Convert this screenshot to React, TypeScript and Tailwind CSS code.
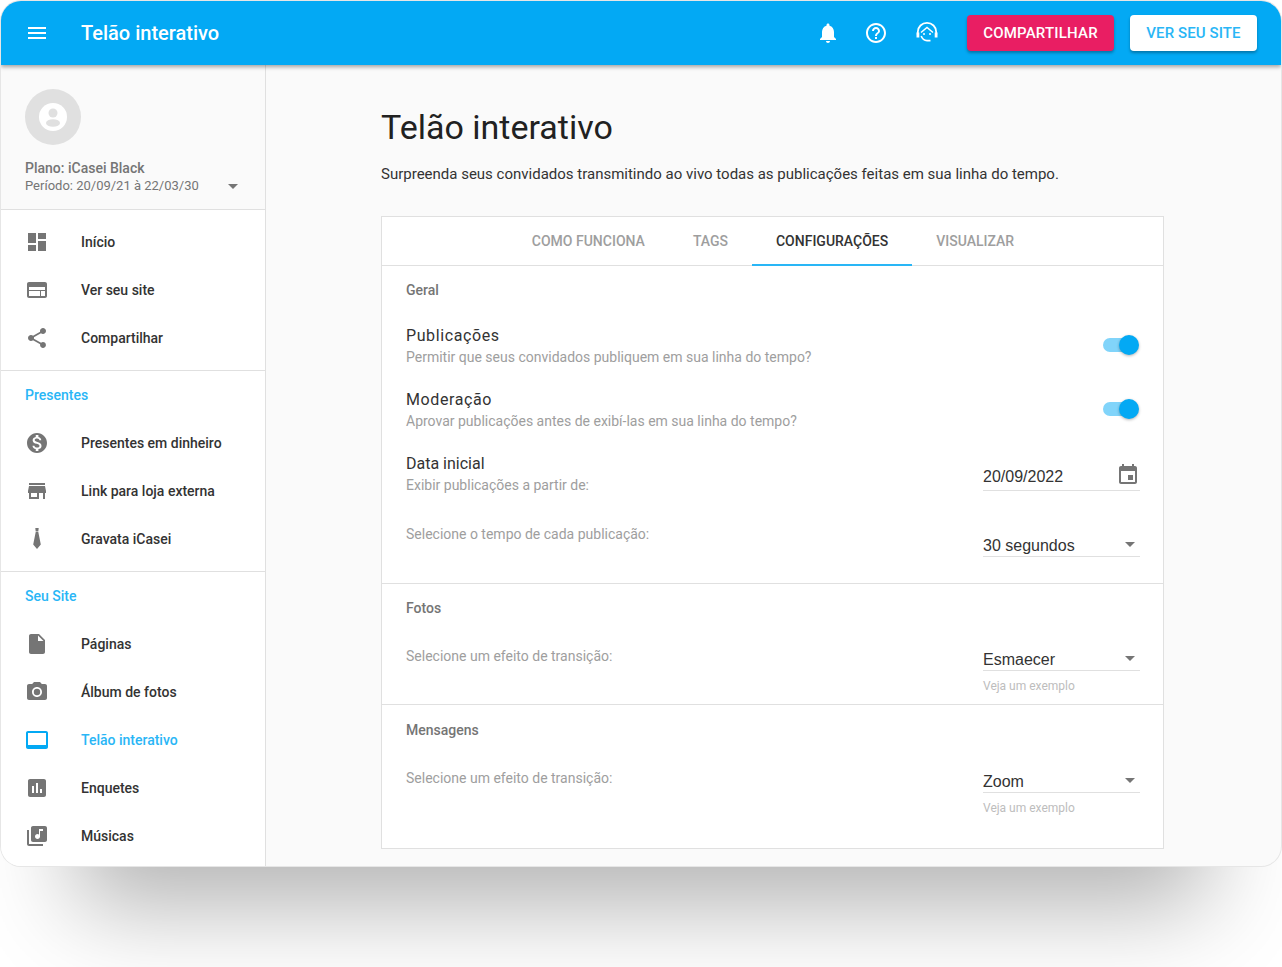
const PATHS = {
  menu: "M3 18h18v-2H3v2zm0-5h18v-2H3v2zm0-7v2h18V6H3z",
  bell: "M12 22c1.1 0 2-.9 2-2h-4c0 1.1.9 2 2 2zm6-6v-5c0-3.07-1.64-5.64-4.5-6.32V4c0-.83-.67-1.5-1.5-1.5s-1.5.67-1.5 1.5v.68C7.63 5.36 6 7.92 6 11v5l-2 2v1h16v-1l-2-2z",
  help: "M11 18h2v-2h-2v2zm1-16C6.48 2 2 6.48 2 12s4.48 10 10 10 10-4.48 10-10S17.52 2 12 2zm0 18c-4.41 0-8-3.59-8-8s3.59-8 8-8 8 3.59 8 8-3.59 8-8 8zm0-14c-2.21 0-4 1.79-4 4h2c0-1.1.9-2 2-2s2 .9 2 2c0 2-3 1.75-3 5h2c0-2.25 3-2.5 3-5 0-2.21-1.79-4-4-4z",
  dashboard: "M3 13h8V3H3v10zm0 8h8v-6H3v6zm10 0h8V11h-8v10zm0-18v6h8V3h-8z",
  web: "M20 4H4c-1.1 0-1.99.9-1.99 2L2 18c0 1.1.9 2 2 2h16c1.1 0 2-.9 2-2V6c0-1.1-.9-2-2-2zM4 18v-5h11v5H4zm12 0v-5h4v5h-4zM4 12V9h16v3H4z",
  share: "M18 16.08c-.76 0-1.44.3-1.96.77L8.91 12.7c.05-.23.09-.46.09-.7s-.04-.47-.09-.7l7.05-4.11c.54.5 1.25.81 2.04.81 1.66 0 3-1.34 3-3s-1.34-3-3-3-3 1.34-3 3c0 .24.04.47.09.7L8.04 9.81C7.5 9.31 6.79 9 6 9c-1.66 0-3 1.34-3 3s1.34 3 3 3c.79 0 1.5-.31 2.04-.81l7.12 4.16c-.05.21-.08.43-.08.65 0 1.61 1.31 2.92 2.92 2.92 1.61 0 2.92-1.31 2.92-2.92s-1.31-2.92-2.92-2.92z",
  money: "M12 2C6.48 2 2 6.48 2 12s4.48 10 10 10 10-4.48 10-10S17.52 2 12 2zm1.41 16.09V20h-2.67v-1.93c-1.71-.36-3.16-1.46-3.27-3.4h1.96c.1 1.05.82 1.87 2.65 1.87 1.96 0 2.4-.98 2.4-1.59 0-.83-.44-1.61-2.67-2.14-2.48-.6-4.18-1.62-4.18-3.67 0-1.72 1.39-2.84 3.11-3.21V4h2.67v1.95c1.86.45 2.79 1.86 2.85 3.39H14.3c-.05-1.11-.64-1.87-2.22-1.87-1.5 0-2.4.68-2.4 1.64 0 .84.65 1.39 2.67 1.91s4.18 1.39 4.18 3.91c-.01 1.83-1.38 2.83-3.12 3.16z",
  store: "M20 4H4v2h16V4zm1 10v-2l-1-5H4l-1 5v2h1v6h10v-6h4v6h2v-6h1zm-9 4H6v-4h6v4z",
  tie: "M10.3 1h3.4l-.4 3.4h-2.6zM10.7 5h2.6l2.5 12.5L12 22l-3.8-4.5z",
  file: "M6 2c-1.1 0-1.99.9-1.99 2L4 20c0 1.1.89 2 1.99 2H18c1.1 0 2-.9 2-2V8l-6-6H6zm7 7V3.5L18.5 9H13z",
  camera: "M9 2L7.17 4H4c-1.1 0-2 .9-2 2v12c0 1.1.9 2 2 2h16c1.1 0 2-.9 2-2V6c0-1.1-.9-2-2-2h-3.17L15 2H9zm3 15c-2.76 0-5-2.24-5-5s2.24-5 5-5 5 2.24 5 5-2.24 5-5 5zm0-1.8a3.2 3.2 0 1 0 0-6.4 3.2 3.2 0 0 0 0 6.4z",
  screen: "M21 3H3c-1.1 0-2 .9-2 2v14c0 1.1.9 2 2 2h18c1.1 0 2-.9 2-2V5c0-1.1-.9-2-2-2zm0 14H3V5h18v12z",
  poll: "M19 3H5c-1.1 0-2 .9-2 2v14c0 1.1.9 2 2 2h14c1.1 0 2-.9 2-2V5c0-1.1-.9-2-2-2zM9 17H7v-7h2v7zm4 0h-2V7h2v10zm4 0h-2v-4h2v4z",
  music: "M20 2H8c-1.1 0-2 .9-2 2v12c0 1.1.9 2 2 2h12c1.1 0 2-.9 2-2V4c0-1.1-.9-2-2-2zm-2 5h-3v5.5c0 1.38-1.12 2.5-2.5 2.5S10 13.88 10 12.5s1.12-2.5 2.5-2.5c.57 0 1.08.19 1.5.51V5h4v2zM4 6H2v14c0 1.1.9 2 2 2h14v-2H4V6z",
  calendar: "M17 12h-5v5h5v-5zM16 1v2H8V1H6v2H5c-1.11 0-1.99.9-1.99 2L3 19c0 1.1.89 2 2 2h14c1.1 0 2-.9 2-2V5c0-1.1-.9-2-2-2h-1V1h-2zm3 18H5V8h14v11z",
};

function Icon({ d, className }: { d: string; className: string }) {
  return (
    <svg viewBox="0 0 24 24" className={className} fill="currentColor" fillRule="evenodd">
      <path d={d} />
    </svg>
  );
}

function NavItem({ icon, label, active }: { icon: string; label: string; active?: boolean }) {
  return (
    <div className="flex h-12 items-center pl-6">
      <Icon d={icon} className={active ? "h-6 w-6 text-[#03a9f4]" : "h-6 w-6 text-[#757575]"} />
      <span className={active ? "ml-8 text-sm font-medium text-[#29b6f6]" : "ml-8 text-sm font-medium text-[#333333]"}>{label}</span>
    </div>
  );
}

function NavLabel({ children }: { children: string }) {
  return <div className="flex h-12 items-center pl-6 text-sm font-medium text-[#29b6f6]">{children}</div>;
}

function Toggle() {
  return (
    <div className="relative mr-[2px] mt-[14px] h-[14px] w-[34px] rounded-full bg-[#81d4fa]">
      <div className="absolute -top-[3px] left-4 h-5 w-5 rounded-full bg-[#03a9f4] shadow-[0_1px_3px_rgba(0,0,0,0.3)]" />
    </div>
  );
}

function SwitchRow({ title, text }: { title: string; text: string }) {
  return (
    <div className="flex h-16 justify-between pl-6 pr-6 pt-[10px]">
      <div>
        <div className="text-base leading-6 tracking-[0.6px] text-[#333333]">{title}</div>
        <div className="-mt-px text-sm leading-5 text-[#9e9e9e]">{text}</div>
      </div>
      <Toggle />
    </div>
  );
}

function Select({ value, hint }: { value: string; hint?: boolean }) {
  return (
    <div className="w-[157px]">
      <div className="flex h-[25px] items-center justify-between border-b border-[#e0e0e0] pr-[5px]">
        <span className="pt-1 font-['Liberation_Sans',sans-serif] text-base text-[#333333]">{value}</span>
        <span className="h-0 w-0 border-x-[5px] border-t-[5px] border-x-transparent border-t-[#757575]" />
      </div>
      {hint && <div className="mt-[7px] text-xs leading-4 text-[#bdbdbd]">Veja um exemplo</div>}
    </div>
  );
}

function SectionTitle({ children }: { children: string }) {
  return <div className="flex h-12 items-center pl-6 text-sm font-medium text-[#757575]">{children}</div>;
}

export default function App() {
  return (
    <div className="h-[967px] w-[1282px] overflow-hidden bg-white px-px pt-px font-['Roboto',sans-serif]">
      <div className="flex h-[865px] w-[1280px] flex-col overflow-hidden rounded-[20px] bg-[#fafafa] shadow-[0_0_0_1px_#e6e6e6,0_115px_90px_-75px_rgba(0,0,0,0.3)]">
        <header className="z-10 flex h-16 shrink-0 items-center bg-[#03a9f4] pl-6 pr-6 shadow-[0_2px_4px_rgba(0,0,0,0.35)]">
          <Icon d={PATHS.menu} className="-mt-px h-6 w-6 text-white" />
          <div className="ml-8 text-xl font-medium text-white">Telão interativo</div>
          <div className="ml-auto flex items-center">
            <Icon d={PATHS.bell} className="h-6 w-6 text-white" />
            <Icon d={PATHS.help} className="ml-6 h-6 w-6 text-white" />
            <svg viewBox="0 0 24 24" className="ml-[27px] h-6 w-6 text-white" fill="none" stroke="currentColor" strokeWidth="1.8">
              <path d="M2.8 14v-3a9.2 9.2 0 0 1 18.4 0v3" />
              <path d="M6 11.5L12 6.5l6 5" strokeWidth="1.5" />
              <path d="M6.2 15c1 2.8 3 4.6 5.8 4.6h3.5" strokeWidth="1.6" />
              <path d="M1.5 11.5h2.8v5H1.5zM19.7 11.5h2.8v5h-2.8z" fill="currentColor" stroke="none" />
              <circle cx="9" cy="13" r="1" fill="currentColor" stroke="none" />
              <circle cx="15" cy="13" r="1" fill="currentColor" stroke="none" />
            </svg>
            <button className="ml-[28px] h-9 w-[147px] rounded-sm bg-[#e91e63] text-[15px] font-medium tracking-[0.2px] text-white shadow-[0_2px_3px_rgba(0,0,0,0.3)]">COMPARTILHAR</button>
            <button className="ml-4 h-9 w-[127px] rounded-sm bg-white text-[15px] font-medium tracking-[0.1px] text-[#29b6f6] shadow-[0_2px_3px_rgba(0,0,0,0.3)]">VER SEU SITE</button>
          </div>
        </header>

        <div className="flex min-h-0 flex-1">
          <aside className="w-[265px] shrink-0 border-r border-[#e0e0e0] bg-white">
            <div className="h-[145px] border-b border-[#e0e0e0] bg-[#fafafa] pl-6 pr-6 pt-6">
              <div className="flex h-14 w-14 items-center justify-center rounded-full bg-[#e0e0e0]">
                <svg viewBox="0 0 28 28" className="h-7 w-7">
                  <circle cx="14" cy="14" r="14" fill="#fff" />
                  <circle cx="14" cy="10" r="4.5" fill="#e0e0e0" />
                  <ellipse cx="14" cy="20" rx="7" ry="3.8" fill="#e0e0e0" />
                </svg>
              </div>
              <div className="mt-[14px] text-sm font-medium leading-[18px] text-[#757575]">Plano: iCasei Black</div>
              <div className="flex items-center justify-between pr-[3px] pt-px text-[13px] leading-4 text-[#757575]">
                <span>Período: 20/09/21 à 22/03/30</span>
                <span className="h-0 w-0 border-x-[5px] border-t-[5px] border-x-transparent border-t-[#757575]" />
              </div>
            </div>
            <div className="border-b border-[#e0e0e0] py-2">
              <NavItem icon={PATHS.dashboard} label="Início" />
              <NavItem icon={PATHS.web} label="Ver seu site" />
              <NavItem icon={PATHS.share} label="Compartilhar" />
            </div>
            <div className="border-b border-[#e0e0e0] pb-2">
              <NavLabel>Presentes</NavLabel>
              <NavItem icon={PATHS.money} label="Presentes em dinheiro" />
              <NavItem icon={PATHS.store} label="Link para loja externa" />
              <NavItem icon={PATHS.tie} label="Gravata iCasei" />
            </div>
            <div>
              <NavLabel>Seu Site</NavLabel>
              <NavItem icon={PATHS.file} label="Páginas" />
              <NavItem icon={PATHS.camera} label="Álbum de fotos" />
              <NavItem icon={PATHS.screen} label="Telão interativo" active />
              <NavItem icon={PATHS.poll} label="Enquetes" />
              <NavItem icon={PATHS.music} label="Músicas" />
            </div>
          </aside>

          <main className="min-w-0 flex-1 pl-[115px] pt-[42px]">
            <h1 className="text-[34px] leading-10 text-[#212121]">Telão interativo</h1>
            <p className="mt-[17px] text-[15px] leading-5 text-[#333333]">
              Surpreenda seus convidados transmitindo ao vivo todas as publicações feitas em sua linha do tempo.
            </p>
            <div className="mt-[32px] w-[783px] border border-[#e0e0e0] bg-white">
              <div className="flex h-[49px] justify-center border-b border-[#e0e0e0] pl-px text-sm font-medium text-[#9e9e9e]">
                <div className="flex items-center px-6">COMO FUNCIONA</div>
                <div className="flex items-center px-6">TAGS</div>
                <div className="-mb-px flex items-center border-b-2 border-[#29b6f6] px-6 text-[#333333]">CONFIGURAÇÕES</div>
                <div className="flex items-center px-6">VISUALIZAR</div>
              </div>

              <section className="border-b border-[#e0e0e0]">
                <SectionTitle>Geral</SectionTitle>
                <SwitchRow title="Publicações" text="Permitir que seus convidados publiquem em sua linha do tempo?" />
                <SwitchRow title="Moderação" text="Aprovar publicações antes de exibí-las em sua linha do tempo?" />
                <div className="flex h-16 justify-between pl-6 pr-[23px] pt-[10px]">
                  <div>
                    <div className="text-base leading-6 text-[#333333]">Data inicial</div>
                    <div className="-mt-px text-sm leading-5 text-[#9e9e9e]">Exibir publicações a partir de:</div>
                  </div>
                  <div className="mt-[11px] flex h-7 w-[157px] items-center justify-between border-b border-[#e0e0e0]">
                    <span className="font-['Liberation_Sans',sans-serif] text-base text-[#333333]">20/09/2022</span>
                    <Icon d={PATHS.calendar} className="-mt-[3px] h-6 w-6 text-[#757575]" />
                  </div>
                </div>
                <div className="flex h-[77px] justify-between pl-6 pr-[23px] pt-[18px]">
                  <div className="text-sm leading-5 text-[#9e9e9e]">Selecione o tempo de cada publicação:</div>
                  <div className="pt-2"><Select value="30 segundos" /></div>
                </div>
              </section>

              <section className="border-b border-[#e0e0e0]">
                <SectionTitle>Fotos</SectionTitle>
                <div className="flex h-[72px] justify-between pl-6 pr-[23px] pt-[14px]">
                  <div className="text-sm leading-5 text-[#9e9e9e]">Selecione um efeito de transição:</div>
                  <Select value="Esmaecer" hint />
                </div>
              </section>

              <section className="pt-px">
                <SectionTitle>Mensagens</SectionTitle>
                <div className="flex h-[94px] justify-between pl-6 pr-[23px] pt-[14px]">
                  <div className="text-sm leading-5 text-[#9e9e9e]">Selecione um efeito de transição:</div>
                  <Select value="Zoom" hint />
                </div>
              </section>
            </div>
          </main>
        </div>
      </div>
    </div>
  );
}
